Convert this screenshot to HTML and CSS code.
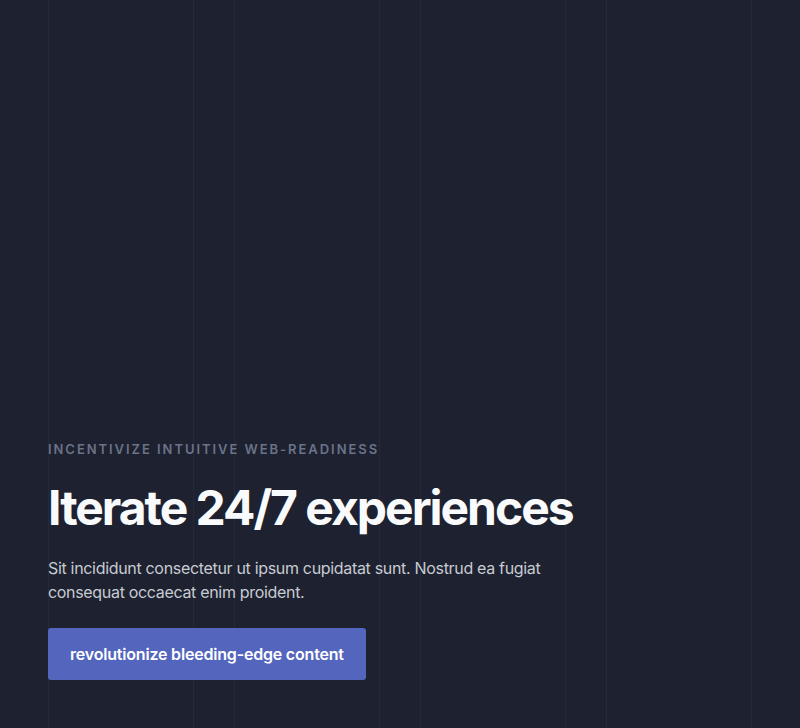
FILE: index.html
```html
<!DOCTYPE html>
<html lang="en">
<head>
<meta charset="utf-8">
<title>Hero</title>
<link rel="stylesheet" href="styles.css">
</head>
<body>
<section class="hero">
  <div class="grid-lines" aria-hidden="true">
    <div class="col"></div>
    <div class="col"></div>
    <div class="col"></div>
    <div class="col"></div>
  </div>
  <div class="content">
    <p class="eyebrow">Incentivize intuitive web-readiness</p>
    <h1 class="title">Iterate 24/7 experiences</h1>
    <p class="lead">Sit incididunt consectetur ut ipsum cupidatat sunt. Nostrud ea fugiat consequat occaecat enim proident.</p>
    <a class="cta" href="#">revolutionize bleeding-edge content</a>
  </div>
</section>
</body>
</html>
```
FILE: styles.css
```css
* { box-sizing: border-box; }
html, body { margin: 0; padding: 0; }
body {
  background: #1d2130;
  font-family: Inter, "Noto Sans", sans-serif;
  color: #f8fafc;
}
.hero {
  position: relative;
  height: 728px;
  padding: 48px;
  display: flex;
  flex-direction: column;
  justify-content: flex-end;
  overflow: hidden;
}
.grid-lines {
  position: absolute;
  top: 0; bottom: 0; left: 48px; right: 48px;
  display: grid;
  grid-template-columns: repeat(4, 1fr);
  column-gap: 40px;
  pointer-events: none;
}
.col {
  border-left: 1px solid rgba(255,255,255,0.045);
  border-right: 1px solid rgba(255,255,255,0.045);
}
.content { position: relative; }
.eyebrow {
  margin: 0;
  font-size: 13px;
  line-height: 20px;
  font-weight: 600;
  letter-spacing: 0.15em;
  text-transform: uppercase;
  color: #6a7387;
}
.title {
  margin: 21px 0 0;
  font-size: 48px;
  line-height: 56px;
  font-weight: 700;
  letter-spacing: -0.042em;
  color: #f9fafb;
}
.lead {
  margin: 20px 0 0;
  max-width: 512px;
  font-size: 16px;
  line-height: 24px;
  letter-spacing: -0.02em;
  color: #c8cbd2;
}
.cta {
  display: inline-block;
  margin-top: 24px;
  padding: 16px 22px;
  font-size: 16px;
  line-height: 20px;
  font-weight: 600;
  letter-spacing: -0.012em;
  color: #ffffff;
  background: #5465bd;
  border-radius: 3px;
  text-decoration: none;
}
```
